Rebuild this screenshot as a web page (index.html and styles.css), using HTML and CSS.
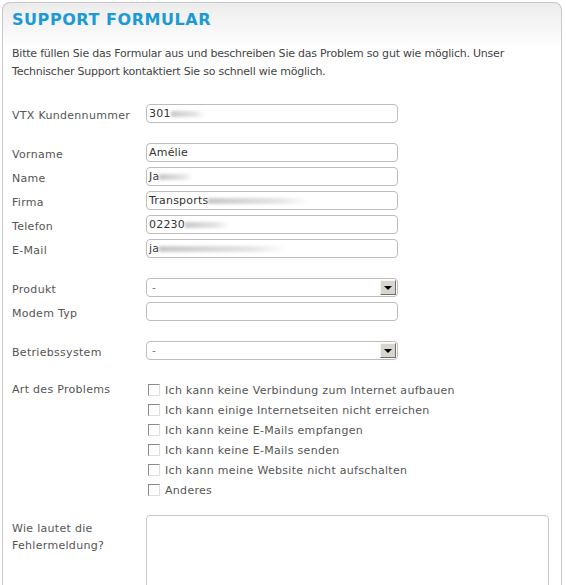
FILE: index.html
```html
<!DOCTYPE html>
<html lang="de">
<head>
    <meta charset="UTF-8">
    <meta name="viewport" content="width=device-width, initial-scale=1.0">
    <title>Support Formular</title>
    <link rel="stylesheet" href="styles.css">
</head>
<body>

    <div class="panel">
        <h2>SUPPORT FORMULAR</h2>
        <p class="intro">Bitte füllen Sie das Formular aus und beschreiben Sie das Problem so gut wie möglich. Unser<br>Technischer Support kontaktiert Sie so schnell wie möglich.</p>

        <form id="supportForm">
            <div class="group">
                <div class="row">
                    <label>VTX Kundennummer</label>
                    <div class="field">301<span class="blur" style="width:34px"></span></div>
                </div>
            </div>

            <div class="group">
                <div class="row">
                    <label>Vorname</label>
                    <div class="field">Amélie</div>
                </div>
                <div class="row">
                    <label>Name</label>
                    <div class="field">Ja<span class="blur" style="width:34px"></span></div>
                </div>
                <div class="row">
                    <label>Firma</label>
                    <div class="field">Transports <span class="blur" style="width:100px"></span></div>
                </div>
                <div class="row">
                    <label>Telefon</label>
                    <div class="field">02230<span class="blur" style="width:44px"></span></div>
                </div>
                <div class="row">
                    <label>E-Mail</label>
                    <div class="field">ja<span class="blur" style="width:128px"></span></div>
                </div>
            </div>

            <div class="group">
                <div class="row">
                    <label>Produkt</label>
                    <div class="field select"><span class="value">-</span><span class="arrow"></span></div>
                </div>
                <div class="row">
                    <label>Modem Typ</label>
                    <div class="field"></div>
                </div>
            </div>

            <div class="group">
                <div class="row">
                    <label>Betriebssystem</label>
                    <div class="field select"><span class="value">-</span><span class="arrow"></span></div>
                </div>
            </div>

            <div class="group">
                <div class="row checks">
                    <label>Art des Problems</label>
                    <div class="options">
                        <div class="option"><span class="box"></span>Ich kann keine Verbindung zum Internet aufbauen</div>
                        <div class="option"><span class="box"></span>Ich kann einige Internetseiten nicht erreichen</div>
                        <div class="option"><span class="box"></span>Ich kann keine E-Mails empfangen</div>
                        <div class="option"><span class="box"></span>Ich kann keine E-Mails senden</div>
                        <div class="option"><span class="box"></span>Ich kann meine Website nicht aufschalten</div>
                        <div class="option"><span class="box"></span>Anderes</div>
                    </div>
                </div>
            </div>

            <div class="row message">
                <label>Wie lautet die<br>Fehlermeldung?</label>
                <div class="textarea"></div>
            </div>
        </form>
    </div>

</body>
</html>
```
FILE: styles.css
```css
body {
    margin: 0;
    font-family: "DejaVu Sans", Verdana, sans-serif;
    font-size: 11px;
    color: #555;
    background: #fff;
}
.panel {
    margin: 2px 0 0 2px;
    width: 549px;
    height: 640px;
    padding: 0 0 0 9px;
    border: 1px solid #c8c8c8;
    border-bottom: none;
    border-radius: 8px 8px 0 0;
    background: linear-gradient(#ececec, #fff 45px);
}
h2 {
    margin: 0;
    padding-top: 7px;
    font-size: 16px;
    line-height: 20px;
    color: #1b9ad6;
    letter-spacing: 0.55px;
}
.intro {
    margin: 15px 0 0;
    line-height: 18px;
    color: #444;
    letter-spacing: -0.22px;
}
#supportForm {
    margin-top: 23px;
}
.group {
    padding-bottom: 15px;
}
.row {
    display: grid;
    grid-template-columns: 134px auto;
    margin-bottom: 5px;
}
.row label {
    padding-top: 5px;
    line-height: 14px;
    letter-spacing: 0.3px;
}
.field {
    box-sizing: border-box;
    width: 252px;
    height: 19px;
    padding: 0 2px;
    border: 1px solid #bdbdbd;
    border-radius: 4px;
    background: #fff;
    color: #333;
    line-height: 17px;
    letter-spacing: 0.2px;
    display: flex;
    align-items: center;
}
.blur {
    display: inline-block;
    height: 6px;
    background: linear-gradient(90deg, #c8c8c8, #e4e4e4 70%, #fff);
    filter: blur(1.5px);
}
.select {
    padding-right: 1px;
}
.select .value {
    flex: 1;
    padding-left: 3px;
    color: #777;
}
.arrow {
    box-sizing: border-box;
    width: 16px;
    height: 15px;
    border: 1px solid;
    border-color: #f4f4f4 #6e6e6e #6e6e6e #f4f4f4;
    background: #d8d5cc;
    display: flex;
    align-items: center;
    justify-content: center;
}
.arrow::after {
    content: "";
    border-left: 4px solid transparent;
    border-right: 4px solid transparent;
    border-top: 4px solid #000;
}
.row.checks {
    margin-bottom: 0;
}
.checks label {
    padding-top: 3px;
}
.options {
    display: flex;
    flex-direction: column;
}
.option {
    height: 20px;
    display: flex;
    align-items: center;
    color: #555;
    letter-spacing: 0.3px;
}
.box {
    box-sizing: border-box;
    width: 12px;
    height: 12px;
    margin: 0 5px 0 2px;
    border: 1px solid;
    border-color: #8a8a8a #dedede #dedede #8a8a8a;
    background: #fff;
}
.message label {
    padding-top: 5px;
    line-height: 17px;
}
.textarea {
    width: 401px;
    height: 120px;
    border: 1px solid #c8c8c8;
    border-radius: 4px;
    background: #fff;
}
```
